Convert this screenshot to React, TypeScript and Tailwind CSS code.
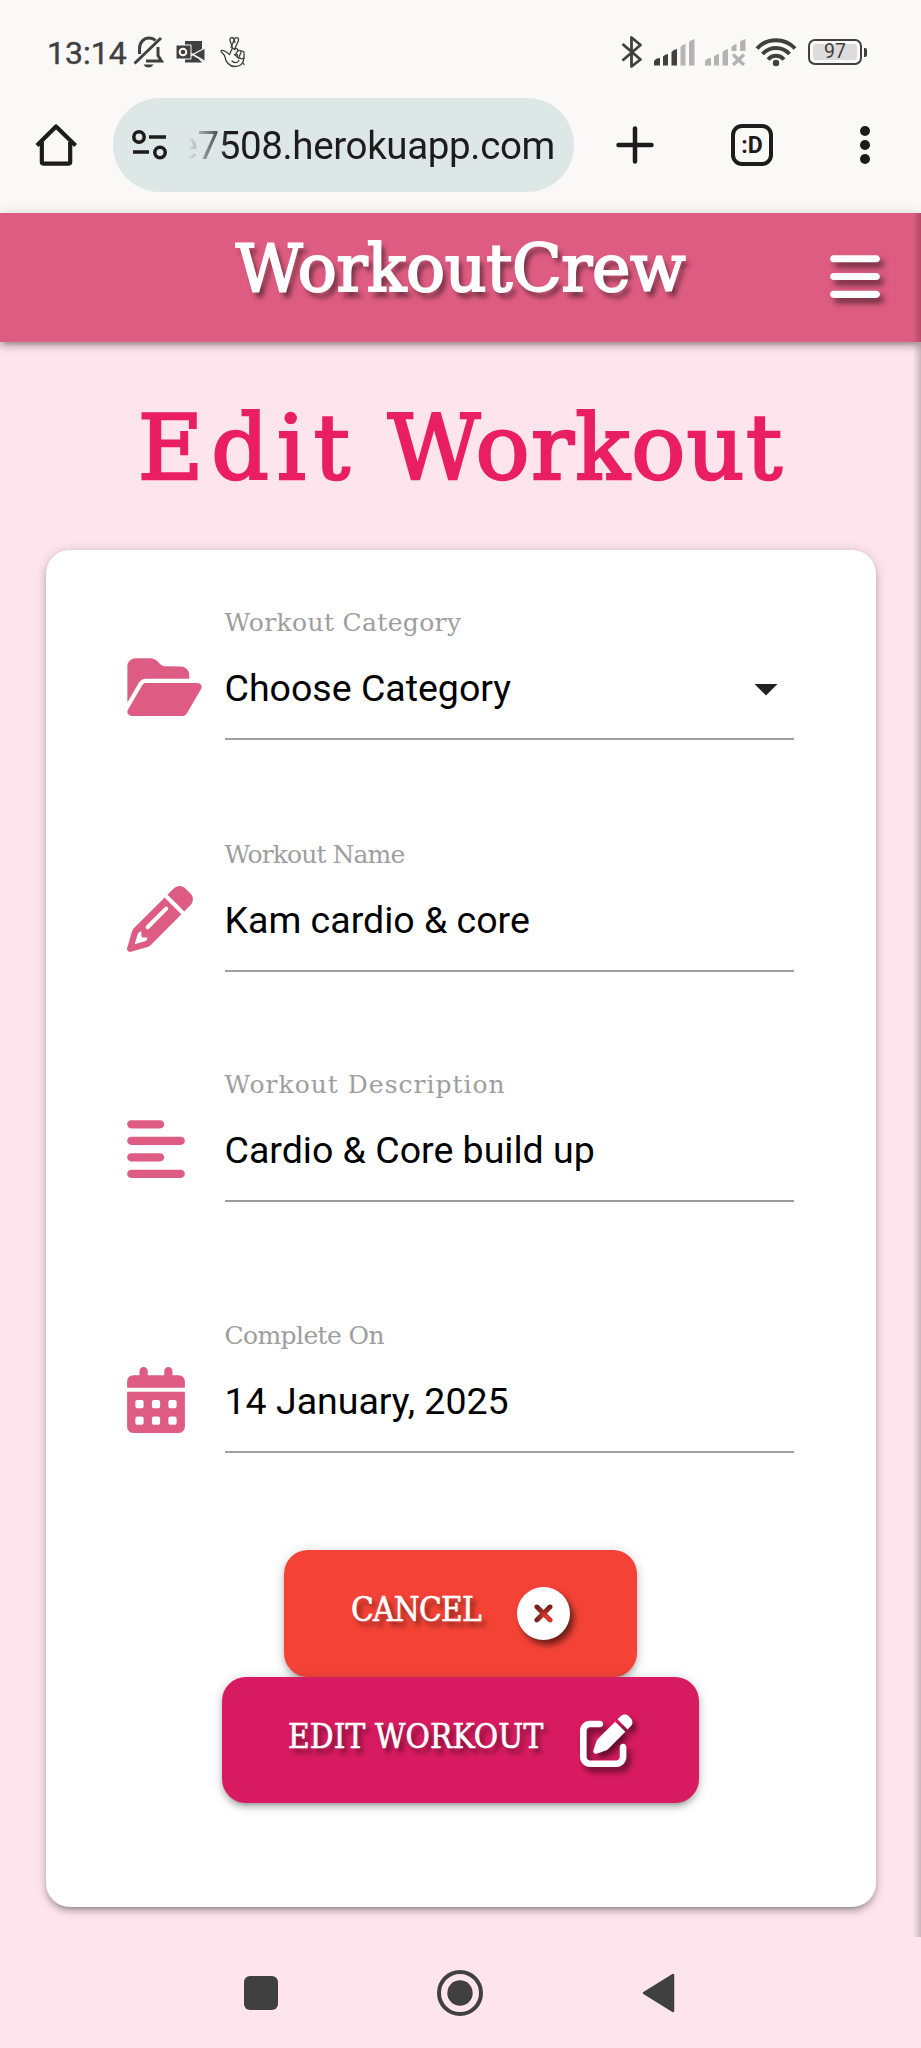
import type { ReactNode } from "react";
import {
  FaBars,
  FaFolderOpen,
  FaPencil,
  FaAlignLeft,
  FaCalendarDays,
  FaCircleXmark,
  FaPenToSquare,
} from "react-icons/fa6";

const typewriter = "font-['DejaVu_Serif',serif]";
const typewriterNarrow =
  "font-['DejaVu_Serif_Condensed','DejaVu_Serif',serif] [font-stretch:condensed]";

function StatusBar() {
  return (
    <div className="flex h-[98px] items-center pt-[6px] pl-[47px] text-[#404040]">
      <span className="w-[86px] pt-[2px] text-[32px] leading-none [-webkit-text-stroke:0.4px_#404040]">13:14</span>
      <svg className="h-[32px] w-[31px] shrink-0" viewBox="0 0 31 32" fill="none" stroke="currentColor" strokeWidth="3">
        <path d="M6.500 18V13C6.500 6 11 2 16 2c3 0 5 1 6.500 2.500M25 11v8.500l3.500 5.500H13" />
        <path d="M1.500 27.500L28 2" />
        <path d="M10.500 28.500h10c-1 2-3 3-5 3s-4-1-5-3z" fill="currentColor" stroke="none" />
      </svg>
      <svg className="ml-[12px] h-[24px] w-[30px] shrink-0" viewBox="0 0 30 24">
        <path d="M9 1h17v9.500L18 14l8 8.500H9z" fill="currentColor" />
        <path d="M28.500 8v14L16 15z" fill="currentColor" />
        <path d="M14 13l15 8.500" stroke="#fbf9f8" strokeWidth="1.500" />
        <path d="M29 8L14 16" stroke="#fbf9f8" strokeWidth="1.300" />
        <path d="M0 5h15v14H0z" fill="currentColor" stroke="#fbf9f8" strokeWidth="1" />
        <circle cx="7" cy="12" r="3.300" fill="none" stroke="#fbf9f8" strokeWidth="2" />
      </svg>
      <svg className="ml-[14px] h-[32px] w-[26px] shrink-0" viewBox="0 0 26 32" fill="none" stroke="currentColor" strokeWidth="1.300" strokeLinejoin="round" strokeLinecap="round">
        <path d="M9.500 18.500C7 16.500 4 14 1.500 14.500c-1.500 1.500 1.500 2.500 3 5 1 5 4 11 10.500 11 6 0 8.500-3.500 9-8.500" />
        <path d="M9.500 18.500L12.500 12 10 4.500C9.500 1 13 .5 14 3.500l1 3" />
        <path d="M14.500 13.500l4-9c.5-3-3-4-4-1.500L11 11.500" />
        <path d="M12.500 12l2 1.500c2-2 4-.5 3 1.500l-2 3.500c1.500-1 3 .5 1.500 2" />
        <path d="M18 15c2-1.500 3.500 0 3 1.500l-2 4.500M21 15.500c2-1 3.500.5 3 2v4.500c-2 1.500-3 1-4 0M14.500 18.500l4.500 4" />
        <path d="M12 25c2.500 2.500 5.500 2 7-.5M23 27l1 1.500" />
      </svg>
      <svg className="ml-[375px] h-[34px] w-[22px] shrink-0" viewBox="0 0 22 34" fill="none" stroke="currentColor" strokeWidth="2.800" strokeLinejoin="round">
        <path d="M1.500 9L19.500 24.500 10.500 31.500V2.500L19.500 10 1.500 25.500" />
      </svg>
      <svg className="ml-[10px] h-[27px] w-[42px] shrink-0" viewBox="0 0 42 27">
        <path d="M1 26.500V22q2-3 6-3v7.500z" fill="currentColor" />
        <path d="M10 26.500v-9q2-2.500 5-2.500v11.500z" fill="currentColor" />
        <path d="M18.500 26.500V13q2-2.500 5.500-3v16.500z" fill="currentColor" />
        <path d="M27.500 26.500V8q2-2.500 5-3v21.500z" fill="#b4b2b2" />
        <path d="M36 26.500V3q2-2 5.500-3v26.500z" fill="#b4b2b2" />
      </svg>
      <svg className="ml-[9px] h-[27px] w-[42px] shrink-0" viewBox="0 0 42 27" fill="#b4b2b2">
        <path d="M1 26.500V22q2-3 6-3v7.500z" />
        <path d="M10 26.500v-9q2-2.500 5-2.500v11.500z" />
        <path d="M18.500 26.500V13q2-2.500 5.500-3v16.500z" />
        <path d="M27.500 12V8q2-2.500 5-3v7z" />
        <path d="M36 12V3q2-2 5.500-3v12z" />
        <path d="M29 15.500L40 26M40 15.500L29 26" stroke="#b4b2b2" strokeWidth="3.500" />
      </svg>
      <svg className="ml-[9px] h-[30px] w-[42px] shrink-0" viewBox="0 0 42 30" fill="none" stroke="currentColor" strokeWidth="4">
        <path d="M2 11.500C12 0.500 30 0.500 40 11.500" />
        <path d="M7.500 17C15 9 27 9 34.500 17" />
        <path d="M13 22.500C17.500 17.500 24.500 17.500 29 22.500" />
        <circle cx="21" cy="26" r="3.200" fill="currentColor" stroke="none" />
      </svg>
      <div className="ml-[11px] flex h-[26px] w-[54px] shrink-0 items-center justify-center rounded-[7px] border-[2.500px] border-[#404040] p-[3px]">
        <div className="flex h-full w-full items-center justify-center rounded-[3px] bg-[#dddbdb] text-[19.500px] leading-none">97</div>
      </div>
      <div className="ml-[2px] h-[9px] w-[3px] shrink-0 rounded-r-[2px] bg-[#404040]" />
    </div>
  );
}

function BrowserBar() {
  return (
    <div className="flex h-[115px] items-start text-[#1d1b1b]">
      <div className="flex h-[94px] w-full items-center">
        <svg className="ml-[35px] h-[44px] w-[43px] shrink-0" viewBox="0 0 44 44" fill="none" stroke="currentColor" strokeWidth="4.300" strokeLinejoin="round">
          <path d="M2 22.500L21.500 3 41.500 22.500" />
          <path d="M7 19v20.500a1.500 1.500 0 0 0 1.500 1.500h26a1.500 1.500 0 0 0 1.500-1.500V19" />
        </svg>
        <div className="ml-[35px] flex h-[94px] w-[461px] shrink-0 items-center rounded-full bg-[#dde7e5] pl-[19px]">
          <svg className="h-[32px] w-[36px] shrink-0" viewBox="0 0 36 32" fill="none" stroke="currentColor" strokeWidth="3.500">
            <circle cx="7" cy="8" r="5.200" />
            <path d="M17 8h17M1 23h16" />
            <circle cx="28" cy="23.500" r="5.200" />
          </svg>
          <div className="flex w-[387px] justify-end pt-[2px] text-[38.500px] leading-[60px] tracking-[-0.350px] whitespace-nowrap [mask-image:linear-gradient(to_right,transparent_20px,black_60px)]">
            e7508.herokuapp.com
          </div>
        </div>
        <svg className="ml-[41px] h-[40px] w-[40px] shrink-0" viewBox="0 0 40 40" stroke="currentColor" strokeWidth="4.500" strokeLinecap="round">
          <path d="M20 3.500v33M3.500 20h33" />
        </svg>
        <div className="ml-[76px] flex h-[42px] w-[42px] shrink-0 items-center justify-center rounded-[11px] border-4 border-current text-[23px] leading-none font-bold">
          :D
        </div>
        <div className="ml-[87px] flex flex-col gap-[4px]">
          <span className="size-[10px] rounded-full bg-current" />
          <span className="size-[10px] rounded-full bg-current" />
          <span className="size-[10px] rounded-full bg-current" />
        </div>
      </div>
    </div>
  );
}

function Field({ icon, label, labelSpacing, value, caret }: {
  icon: ReactNode;
  label: string;
  labelSpacing: string;
  value: string;
  caret?: boolean;
}) {
  return (
    <div className="grid h-[134px] grid-cols-[99px_569px]">
      <div className="pt-[48px] pl-[1px] text-[66px] text-[#de5c83]">{icon}</div>
      <div className="border-b-2 border-[#9e9e9e]">
        <div className={`${typewriter} h-[32px] text-[25px] leading-[34px] whitespace-nowrap text-[#9e9e9e] ${labelSpacing}`}>{label}</div>
        <div className="flex h-[100px] items-center justify-between pr-[16px]">
          <span className="text-[37.500px] leading-[44px] whitespace-nowrap text-black">{value}</span>
          {caret && (
            <svg className="mt-[4px] h-[12px] w-[24px]" viewBox="0 0 24 12" fill="#212121">
              <path d="M0.500 0h23L12 11.500z" />
            </svg>
          )}
        </div>
      </div>
    </div>
  );
}

const buttonShadow = "shadow-[0_5px_5px_rgba(0,0,0,0.14),0_7px_2px_-5px_rgba(0,0,0,0.12),0_2px_12px_rgba(0,0,0,0.2)]";
const iconShadow = "[filter:drop-shadow(4px_5px_3px_rgba(0,0,0,0.55))]";
const textShadow = "[text-shadow:4px_5px_5px_rgba(0,0,0,0.5)]";

export default function App() {
  return (
    <div className="relative flex h-[2048px] w-[921px] flex-col overflow-hidden bg-[#fee4ec] font-[Roboto,sans-serif]">
      <div className="h-[213px] shrink-0 bg-[#fbf9f8]">
        <StatusBar />
        <BrowserBar />
      </div>

      <header className="grid h-[129px] shrink-0 grid-cols-[1fr_auto_1fr] items-center bg-[#de5c81] text-white shadow-[0_5px_5px_rgba(0,0,0,0.14),0_7px_2px_-5px_rgba(0,0,0,0.12),0_2px_12px_rgba(0,0,0,0.2)]">
        <div />
        <div className={`${typewriter} pb-[18px] text-[65px] leading-[80px] tracking-[-0.4px] whitespace-nowrap [-webkit-text-stroke:2px_white] [text-shadow:4px_6px_5px_rgba(0,0,0,0.5)]`}>
          WorkoutCrew
        </div>
        <div className="flex justify-end pr-[41px] pb-[3px]">
          <FaBars className={`h-[57px] w-[50px] ${iconShadow}`} />
        </div>
      </header>

      <h1 className={`${typewriter} h-[208px] shrink-0 pt-[2px] text-center text-[90px] leading-[208px] tracking-[1.300px] whitespace-nowrap text-[#e91e63] [-webkit-text-stroke:2.500px_#e91e63]`}>
        <span className="tracking-[8px]">Edit</span> Workout
      </h1>

      <main className="mx-auto h-[1357px] w-[830px] shrink-0 rounded-[24px] bg-white pt-[56px] pl-[80px] shadow-[0_5px_5px_rgba(0,0,0,0.14),0_7px_2px_-5px_rgba(0,0,0,0.12),0_2px_12px_rgba(0,0,0,0.2)]">
        <div className="flex flex-col">
          <Field icon={<FaFolderOpen className="h-[66px] w-[75px]" />} label="Workout Category" labelSpacing="tracking-[0.350px]" value="Choose Category" caret />
          <div className="mt-[97.500px]">
            <Field icon={<FaPencil className="size-[66px]" />} label="Workout Name" labelSpacing="tracking-[-0.900px]" value="Kam cardio & core" />
          </div>
          <div className="mt-[96.500px]">
            <Field icon={<FaAlignLeft className="h-[66px] w-[58px]" />} label="Workout Description" labelSpacing="tracking-[1px]" value="Cardio & Core build up" />
          </div>
          <div className="mt-[117px]">
            <Field icon={<FaCalendarDays className="h-[66px] w-[58px]" />} label="Complete On" labelSpacing="tracking-[-0.600px]" value="14 January, 2025" />
          </div>
        </div>
        <div className="mt-[97px] -ml-[80px] flex flex-col items-center">
          <button className={`flex h-[127px] w-[353px] items-center justify-between rounded-[24px] bg-[#f44336] px-[67px] text-white ${buttonShadow}`}>
            <span className={`${typewriterNarrow} pb-[7px] text-[33px] leading-[40px] tracking-[-0.700px] [-webkit-text-stroke:0.6px_white] ${textShadow}`}>CANCEL</span>
            <FaCircleXmark className={`size-[53px] ${iconShadow}`} />
          </button>
          <button className={`flex h-[126px] w-[477px] items-center justify-between rounded-[24px] bg-[#d81b60] px-[66px] text-white ${buttonShadow}`}>
            <span className={`${typewriterNarrow} pb-[7px] text-[33px] leading-[40px] tracking-[0.100px] whitespace-nowrap [-webkit-text-stroke:0.6px_white] ${textShadow}`}>EDIT WORKOUT</span>
            <FaPenToSquare className={`size-[53px] ${iconShadow}`} />
          </button>
        </div>
      </main>

      <nav className="flex h-[141px] shrink-0 items-center pt-[30px] pl-[244px] text-[#404040]">
        <span className="size-[34px] rounded-[6px] bg-current" />
        <svg className="ml-[158px] size-[48px]" viewBox="0 0 48 48">
          <circle cx="24" cy="24" r="21" fill="none" stroke="currentColor" strokeWidth="4" />
          <circle cx="24" cy="24" r="12.700" fill="currentColor" />
        </svg>
        <svg className="ml-[158px] h-[40px] w-[33px]" viewBox="0 0 33 40">
          <path d="M31 2v36L2 20z" fill="currentColor" stroke="currentColor" strokeWidth="2.500" strokeLinejoin="round" />
        </svg>
      </nav>

      <div className="absolute top-[213px] right-0 h-[1724px] w-[8px] bg-linear-to-r from-transparent to-black/20" />
    </div>
  );
}
